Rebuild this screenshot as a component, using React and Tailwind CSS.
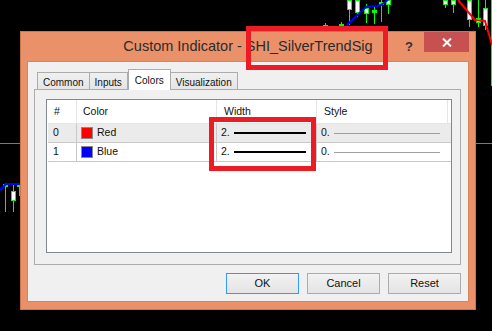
import React from "react";

const FONT = { fontFamily: '"Liberation Sans", Arial, sans-serif' };

function Chart() {
  // candles: x, wick top, wick bottom, body top, body bottom, hollow
  const candles = [
    [325, 23, 27, 25, 26, false],
    [341, 22, 27, 24, 25, false],
    [349, 0, 25, 0, 9, true],
    [357, 0, 17, 0, 12, true],
    [366, 4, 23, 8, 13, true],
    [374, 7, 24, 10, 12, false],
    [381, 0, 22, 2, 4, false],
    [388, 0, 14, 0, 4, true],
    [445, 0, 8, 0, 4, true],
    [453, 0, 13, 0, 4, true],
    [469, 0, 27, 0, 19, true],
    [478, 0, 27, 18, 22, true],
    [485, 0, 30, 8, 25, true],
    [5, 183, 212, 184, 186, false],
    [13, 185, 212, 191, 200, true],
    [19, 183, 196, 184, 186, false],
  ];
  return (
    <svg className="absolute inset-0" width="492" height="331" viewBox="0 0 492 331">
      <line x1="0" y1="143.5" x2="492" y2="143.5" stroke="#6d7b8d" strokeWidth="1" />
      {candles.map(([x, wt, wb, bt, bb, hollow], i) => (
        <g key={i}>
          <line x1={x + 0.5} y1={wt} x2={x + 0.5} y2={wb} stroke="#00ff00" strokeWidth="1" />
          <rect
            x={x - 1.5}
            y={bt + 0.5}
            width="4"
            height={Math.max(bb - bt, 1)}
            fill={hollow ? "#ffffff" : "#00ff00"}
            stroke="#00ff00"
            strokeWidth="1"
          />
        </g>
      ))}
      <line x1="491.5" y1="0" x2="491.5" y2="86" stroke="#00ff00" strokeWidth="1" />
      <polyline
        points="347,25 366,7 376,6 381,5 388,0"
        fill="none"
        stroke="#0000ff"
        strokeWidth="2"
      />
      <polyline
        points="0,190 6,184 20,184"
        fill="none"
        stroke="#0000ff"
        strokeWidth="2"
      />
      <polyline
        points="458,0 475,20 485,21 490,38 492,45"
        fill="none"
        stroke="#ff0000"
        strokeWidth="2"
      />
    </svg>
  );
}

function Tab({ label, active }) {
  return active ? (
    <div className="relative z-10 -mb-px h-[21px] border border-b-0 border-[#acacac] bg-white px-[6px] pt-[3px] text-[10px] text-[#111]">
      {label}
    </div>
  ) : (
    <div className="h-[17px] border border-b-0 border-[#acacac] bg-gradient-to-b from-[#f0f0f0] to-[#e5e5e5] px-[5px] pt-[2px] text-[10px] text-[#111] -ml-px first:ml-0">
      {label}
    </div>
  );
}

function Row({ idx, name, color, shaded }) {
  return (
    <div className={`flex h-[19px] items-center border-b border-[#c8c8c8] text-[10.5px] text-[#111] ${shaded ? "bg-[#ebebeb]" : "bg-white"}`}>
      <div className="flex h-full w-[29px] items-center border-r border-[#c8c8c8] pl-[5px]">{idx}</div>
      <div className="flex h-full w-[140px] items-center gap-[4px] border-r border-[#c8c8c8] pl-[4px]">
        <span className="h-[12px] w-[12px] border border-[#8a8a8a]" style={{ backgroundColor: color }} />
        {name}
      </div>
      <div className="flex h-full w-[100px] items-center border-r border-[#c8c8c8] pl-[4px]">
        <span className="w-[13px]">2.</span>
        <span className="h-[2px] w-[72px] bg-black" />
      </div>
      <div className="flex h-full flex-1 items-center pl-[4px]">
        <span className="w-[13px]">0.</span>
        <span className="h-px w-[106px] bg-[#a0a0a0]" />
      </div>
    </div>
  );
}

function Button({ label, focused }) {
  return (
    <button
      className={`h-[21px] w-[73px] border bg-gradient-to-b from-[#f2f2f2] to-[#e4e4e4] text-[11px] text-[#111] ${focused ? "border-[#3399ff]" : "border-[#acacac]"}`}
    >
      {label}
    </button>
  );
}

export default function App() {
  return (
    <div className="relative h-[331px] w-[492px] overflow-hidden bg-black pl-[20px] pt-[31px]" style={FONT}>
      <Chart />

      <div className="relative z-10 flex h-[279px] w-[456px] flex-col border border-[#c9774f] bg-[#ea916a] px-[6px] pb-[7px]">
        {/* title bar */}
        <div className="relative flex h-[29px] items-center justify-center">
          <span className="text-[14.5px] text-[#2b2b2b]">Custom Indicator - SHI_SilverTrendSig</span>
          <span className="absolute right-[56px] top-[5px] text-[13px] font-bold text-[#333]">?</span>
          <div className="absolute right-0 top-0 flex h-[20px] w-[45px] items-center justify-center bg-[#c75050]">
            <svg width="10" height="9" viewBox="0 0 10 9">
              <path d="M1 0.5 L9 8.5 M9 0.5 L1 8.5" stroke="#fff" strokeWidth="2" />
            </svg>
          </div>
        </div>

        {/* client */}
        <div className="flex flex-1 flex-col border border-[#d8845d] bg-[#f0f0f0] pl-[6px] pr-[7px] pt-[7px]">
          <div className="flex items-end pl-[3px]">
            <Tab label="Common" />
            <Tab label="Inputs" />
            <Tab label="Colors" active />
            <Tab label="Visualization" />
          </div>
          <div className="h-[176px] w-[427px] border border-[#acacac] bg-[#f0f0f0]">
            <div className="h-full w-full pl-[11px] pt-[9px]">
              <div className="flex h-[154px] w-[406px] flex-col border border-[#828790] bg-white pl-px">
                <div className="flex h-[24px] items-center border-b border-[#e5e5e5] text-[10.5px] text-[#111]">
                  <div className="flex h-full w-[29px] items-center border-r border-[#e5e5e5] pl-[6px]">#</div>
                  <div className="flex h-full w-[140px] items-center border-r border-[#e5e5e5] pl-[6px]">Color</div>
                  <div className="flex h-full w-[100px] items-center border-r border-[#e5e5e5] pl-[7px]">Width</div>
                  <div className="flex h-full w-[131px] items-center border-r border-[#e5e5e5] pl-[7px]">Style</div>
                </div>
                <Row idx="0" name="Red" color="#ff0000" shaded />
                <Row idx="1" name="Blue" color="#0000ff" />
              </div>
            </div>
          </div>
          <div className="mt-[8px] flex justify-end gap-[8px]">
            <Button label="OK" focused />
            <Button label="Cancel" />
            <Button label="Reset" />
          </div>
        </div>
      </div>

      {/* annotation boxes */}
      <div className="absolute left-[246px] top-[26px] z-20 h-[44px] w-[142px] border-[5px] border-[#ed1c24]" />
      <div className="absolute left-[209px] top-[117px] z-20 h-[54px] w-[107px] border-[5px] border-[#ed1c24]" />
    </div>
  );
}
